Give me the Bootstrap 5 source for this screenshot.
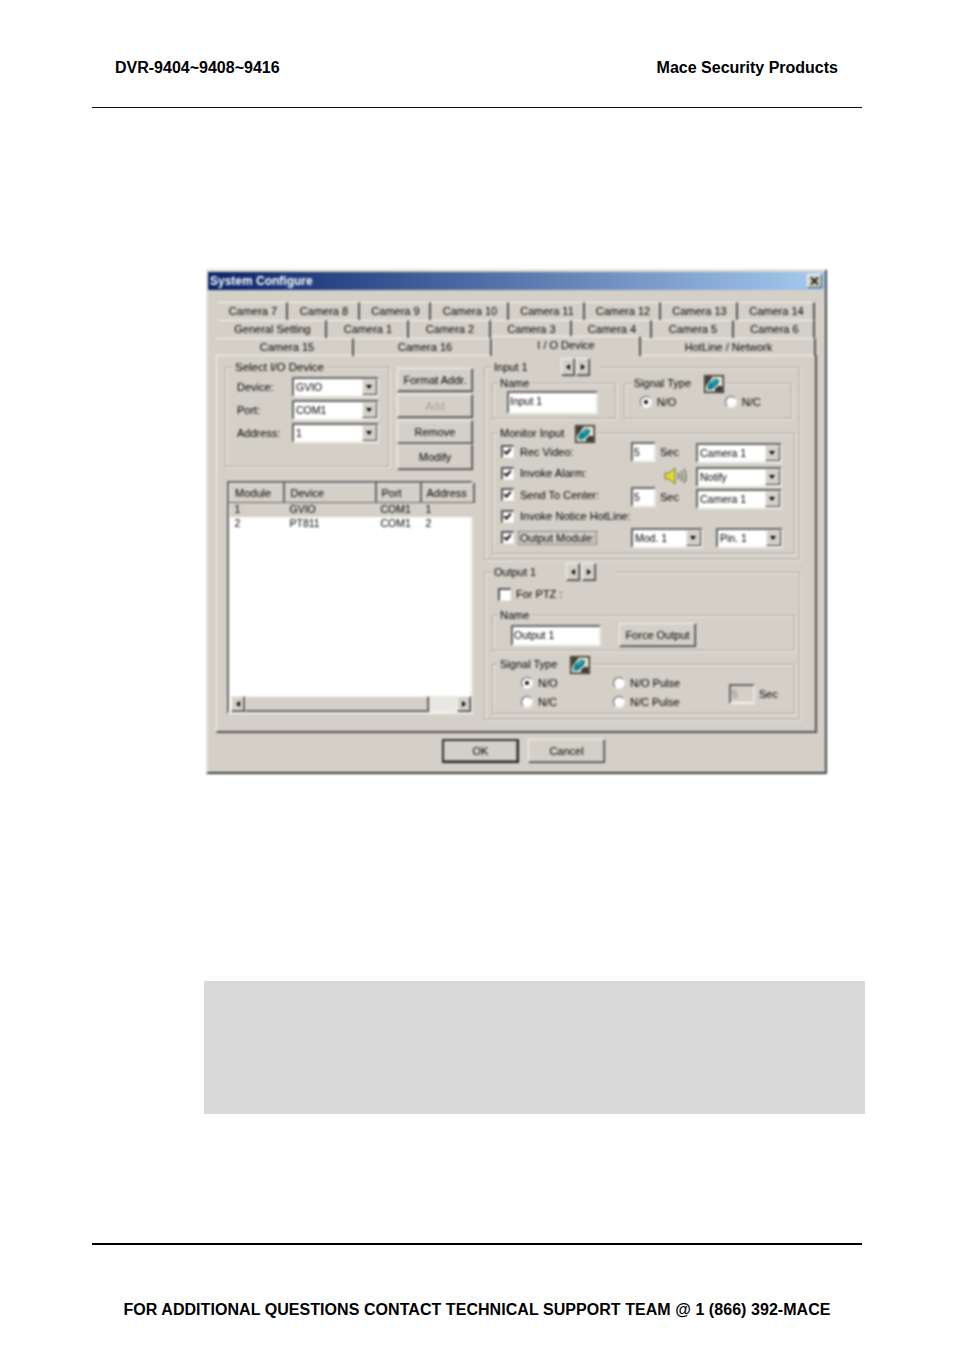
<!DOCTYPE html>
<html lang="en">
<head>
<meta charset="utf-8">
<title>DVR-9404~9408~9416</title>
<link rel="stylesheet" href="https://cdn.jsdelivr.net/npm/bootstrap@5.3.0/dist/css/bootstrap.min.css">
<style>
html,body{margin:0;background:#fff;}
body{font-family:"Liberation Sans",Arial,sans-serif;color:#000;height:1351px;overflow:hidden;}
.sheet{width:770px;margin-left:92px;}
.pagehead{padding:59px 24px 0 23px;height:107px;font:bold 16px/18px "Liberation Sans",Arial,sans-serif;}
.rule1{height:1px;background:#111;}
.rule2{height:2px;background:#000;margin-top:129px;}
.graybox{width:661px;height:133px;margin:207px 0 0 112px;background:#d9d9d9;}
.pagefoot{margin-top:56px;text-align:center;font:bold 16px/18px "Liberation Sans",Arial,sans-serif;white-space:nowrap;letter-spacing:.055px;}

.dlg{width:621px;height:505px;margin:161px 0 0 114px;background:#d4d0c8;border:2px solid;border-color:#e6e4de #4a4a4a #3a3a3a #e6e4de;filter:blur(.8px);
 font:11px/14px "Liberation Sans",Arial,sans-serif;color:#000;white-space:nowrap;}
.wintitle{height:18px;margin-top:1px;padding:0 3px 0 2px;background:linear-gradient(90deg,#0a246a,#a6caf0);color:#fff;font-weight:bold;font-size:12px;}
.winclose{width:15px;height:14px;background:#d4d0c8;border:1px solid;border-color:#fff #404040 #404040 #fff;}
.tabrow{display:grid;height:18px;}
.tabsa{margin:12px 0 0 10px;grid-template-columns:70px 72px 71px 78px 76px 76px 77px 77px;width:597px;}
.tabsb{margin-left:10px;grid-template-columns:109px 82px 82px 81px 80px 82px 81px;width:597px;}
.tabsc{margin-left:8px;grid-template-columns:138px 138px 149px 175px;width:600px;position:relative;z-index:1;}
.tabcell{border-top:1px solid #f4f3ef;border-right:2px solid #555;text-align:center;line-height:16px;padding-left:2px;}
.tabwide{padding-left:6px;}
.tabon{margin-top:-2px;height:20px;background:#d4d0c8;border-left:1px solid #f4f3ef;line-height:17px;padding-left:0;}
.tabpanel{width:601px;height:378px;margin-left:8px;margin-top:-1px;border:1px solid;border-color:#f4f3ef #505050 #505050 #f4f3ef;border-right-width:2px;border-bottom-width:2px;}
.leftcol{width:248px;margin:4px 0 0 8px;}
.rightcol{width:316px;margin:2px 0 0 11px;}
.grp{border:1px solid #a9a59b;box-shadow:1px 1px 0 #f4f3ef,inset 1px 1px 0 #f4f3ef;}
.grp>legend{float:none;width:auto;margin:0 0 0 7px;padding:0 2px;font-size:inherit;line-height:14px;height:14px;background:#d4d0c8;display:flex;align-items:center;}
.grp>legend+*{clear:none;}
.grp.grpnest>legend{margin-left:5px;}
.grpdev{width:164px;height:107px;}
.grpdev>legend{font-size:11.5px;}
.devrows{padding:3px 0 0 11px;}
.devrow{height:20px;margin-bottom:3px;}
.lab55{width:55px;}
.combo{height:20px;background:#fff;border:2px solid;border-color:#666 #e8e6e0 #f4f3ef #666;padding-left:2px;padding-right:15px;position:relative;line-height:17px;color:#000;font-size:10.5px;}
.comboarrow{position:absolute;right:0;top:0;bottom:0;width:15px;background:#d4d0c8;border:1px solid;border-color:#f4f3ef #404040 #404040 #f4f3ef;}
.comboarrow::after{content:"";position:absolute;left:3px;top:5px;border:3.5px solid transparent;border-top:4px solid #000;border-bottom:0;}
.w87{width:87px;}.w86{width:86px;}.w72{width:72px;}.w67{width:67px;}.w68{width:68px;}
.pinbox{margin-left:13px;}
.drop1{margin-top:2px;}
.drop2{margin-top:4px;}
.drop3{margin-top:6px;}
.drop4{margin-top:8px;}
.rbtn{display:flex;align-items:center;justify-content:center;background:#d4d0c8;border:1px solid;border-color:#f4f3ef #404040 #404040 #f4f3ef;box-shadow:inset -1px -1px 0 #808080;color:#000;}
.sidebtns{width:76px;margin:8px 0 0 8px;display:grid;grid-auto-rows:24px;gap:2px;}
.btnup{margin-top:-2px;}
.rbtn.btndim{color:#a5a298;}
.lst{width:246px;height:233px;margin:11px 0 0 2px;background:#fff;border:2px solid;border-color:#666 #e8e6e0 #f4f3ef #666;position:relative;}
.lsttbl{width:244px;table-layout:fixed;border-collapse:collapse;color:#000;}
.lsttbl th{height:19px;font-weight:normal;padding:0 0 0 5px;background:#d4d0c8;border-top:1px solid #f4f3ef;border-left:1px solid #f4f3ef;border-right:2px solid #666;border-bottom:1px solid #666;}
.lsttbl td{height:14px;padding:0 0 0 5px;line-height:13px;font-size:10.5px;}
.lstc1{width:54px;}.lstc2{width:92px;}.lstc3{width:45px;}.lstc4{width:53px;}
.lsttbl .lstc2{padding-left:6px;}
.lstsel td{background:#d4d0c8;}
.lstbar{position:absolute;left:2px;right:0;bottom:0;height:16px;background:#dedcd6;display:flex;}
.sbtn{width:14px;}
.sthumb{width:184px;}
.strack{flex:1;background:repeating-conic-gradient(#d4d0c8 0 25%,#fff 0 50%) 0 0/2px 2px;}
.sbtn::after,.spinb::after{content:"";border:3.5px solid transparent;}
.sleft::after{border-left:0;border-right:4px solid #000;}
.sright::after{border-right:0;border-left:4px solid #000;}
.grpinput{height:202px;}
.spins{margin-left:33px;margin-right:9px;gap:1px;height:18px;}
.spinb{width:14px;height:18px;}
.spinsout{margin-left:30px;margin-right:17px;gap:2px;}
.grpinput>legend,.grpoutput>legend{height:18px;line-height:18px;}
.grpsmall{height:43px;}
.subrow{margin:0 7px;gap:8px;}
.w125{width:125px;}.w170{width:170px;}
.insetfield{background:#fff;border:2px solid;border-color:#666 #e8e6e0 #f4f3ef #666;line-height:17px;padding-left:1px;color:#000;font-size:10.5px;}
.fldname{width:91px;height:23px;margin:1px 0 0 14px;}
.radrow{padding:5px 0 0 15px;}
.radio{flex:none;width:12px;height:12px;border-radius:50%;background:#fff;border:1px solid;border-color:#555 #eee #eee #555;position:relative;}
.radon::after{content:"";position:absolute;left:3px;top:3px;width:4px;height:4px;border-radius:50%;background:#000;}
.radlab{margin-left:5px;}
.grpmon{height:128px;margin:7px 7px 0;width:303px;}
.monrows{padding:0 0 0 8px;display:grid;grid-auto-rows:21.5px;margin-top:1px;}
.chk{flex:none;width:13px;height:13px;background:#fff;border:solid;border-width:2px 1px 1px 2px;border-color:#555 #eee #eee #555;display:flex;}
.chk svg{width:9px;height:9px;}
.chklab{margin-left:6px;width:111px;}
.numfld{width:25px;height:20px;flex:none;}
.seclab{width:40px;padding-left:4px;}
.spk{width:40px;padding-left:7px;}
.gicon{width:20px;height:18px;margin-left:11px;flex:none;margin-top:2px;}
.giconb{margin-left:13px;}
.outlinefocus{outline:1px dotted #333;outline-offset:0;padding:0 1px;margin-left:-1px;}
.grpoutput{height:157px;margin-top:3px;}
.ptzrow{height:20px;margin:3px 0 0 13px;}
.grpoutname{width:303px;height:43px;margin:4px 0 0 7px;}
.fldout{width:90px;height:21px;margin:3px 0 0 18px;}
.forcebtn{width:77px;height:24px;margin:1px 0 0 18px;}
.grpoutsig{width:303px;height:57px;margin:6px 0 0 7px;}
.sigcols{padding:2px 0 0 28px;}
.sigcol{width:92px;display:grid;grid-auto-rows:19px;}
.sigcolb{width:116px;}
.insetfield.fldoff{width:26px;height:20px;background:#d4d0c8;color:#8a8880;margin-top:3px;}
.sigsec{margin:3px 0 0 4px;}
.botbtns{margin:6px 0 0 234px;gap:9px;}
.okbtn,.cancelbtn{width:77px;height:24px;}
.okbtn{border:2px solid;border-color:#333 #222 #222 #333;}
</style>
</head>
<body>
<svg width="0" height="0" class="d-block">
 <symbol id="chip" viewBox="0 0 20 18">
  <rect width="20" height="18" fill="#2e2e28"/>
  <rect x="1.500" y="1.500" width="17" height="15" fill="#efe9cf"/>
  <path d="M1.500 1.500H9L4 8 1.500 12zM11 16.500v-3l4-3 3.500 1v5z" fill="#3c3a32"/>
  <path d="M3 13 5 8 11 3.500 15.500 5 14 9l-6 5.500H4z" fill="#0c8296"/>
  <path d="M7 8 11 5l2 .5-4 3.500z" fill="#3fb6c8"/>
 </symbol>
 <symbol id="tick" viewBox="0 0 11 11"><path d="M1.500 5l2.800 3L9.500 2" fill="none" stroke="#000" stroke-width="2.200"/></symbol>
</svg>
<div class="sheet">
 <header class="pagehead d-flex justify-content-between"><span>DVR-9404~9408~9416</span><span>Mace Security Products</span></header>
 <div class="rule1"></div>

 <div class="dlg">
  <div class="wintitle d-flex align-items-center justify-content-between">
   <span>System Configure</span>
   <span class="winclose d-flex"><svg viewBox="0 0 13 12" width="13" height="12"><path d="M3 2.500l7 7M10 2.500l-7 7" stroke="#222" stroke-width="2"/></svg></span>
  </div>
  <div class="tabrow tabsa"><div class="tabcell">Camera 7</div><div class="tabcell">Camera 8</div><div class="tabcell">Camera 9</div><div class="tabcell">Camera 10</div><div class="tabcell">Camera 11</div><div class="tabcell">Camera 12</div><div class="tabcell">Camera 13</div><div class="tabcell">Camera 14</div></div>
  <div class="tabrow tabsb"><div class="tabcell">General Setting</div><div class="tabcell">Camera 1</div><div class="tabcell">Camera 2</div><div class="tabcell">Camera 3</div><div class="tabcell">Camera 4</div><div class="tabcell">Camera 5</div><div class="tabcell">Camera 6</div></div>
  <div class="tabrow tabsc"><div class="tabcell tabwide">Camera 15</div><div class="tabcell tabwide">Camera 16</div><div class="tabcell tabon">I / O Device</div><div class="tabcell">HotLine / Network</div></div>
  <div class="tabpanel d-flex">
   <div class="leftcol">
    <div class="d-flex">
     <fieldset class="grp grpdev">
      <legend>Select I/O Device</legend>
      <div class="devrows">
       <div class="devrow d-flex align-items-center"><span class="lab55">Device:</span><div class="combo w87">GVIO<span class="comboarrow"></span></div></div>
       <div class="devrow d-flex align-items-center"><span class="lab55">Port:</span><div class="combo w87">COM1<span class="comboarrow"></span></div></div>
       <div class="devrow d-flex align-items-center"><span class="lab55">Address:</span><div class="combo w87">1<span class="comboarrow"></span></div></div>
      </div>
     </fieldset>
     <div class="sidebtns">
      <div class="rbtn">Format Addr.</div><div class="rbtn btndim">Add</div><div class="rbtn">Remove</div><div class="rbtn btnup">Modify</div>
     </div>
    </div>
    <div class="lst">
     <table class="lsttbl">
      <thead><tr><th class="lstc1">Module</th><th class="lstc2">Device</th><th class="lstc3">Port</th><th class="lstc4">Address</th></tr></thead>
      <tbody><tr class="lstsel"><td>1</td><td class="lstc2">GVIO</td><td>COM1</td><td>1</td></tr><tr><td>2</td><td class="lstc2">PT811</td><td>COM1</td><td>2</td></tr></tbody>
     </table>
     <div class="lstbar"><div class="rbtn sbtn sleft"></div><div class="rbtn sthumb"></div><div class="strack"></div><div class="rbtn sbtn sright"></div></div>
    </div>
   </div>
   <div class="rightcol">
    <fieldset class="grp grpinput">
     <legend>Input 1<span class="spins d-flex"><span class="rbtn spinb sleft"></span><span class="rbtn spinb sright"></span></span></legend>
     <div class="subrow d-flex">
      <fieldset class="grp grpsmall grpnest w125"><legend>Name</legend><div class="insetfield fldname">Input 1</div></fieldset>
      <fieldset class="grp grpsmall w170"><legend>Signal Type<svg class="gicon giconb"><use href="#chip"/></svg></legend>
       <div class="radrow d-flex align-items-center"><span class="radio radon"></span><span class="radlab w68">N/O</span><span class="radio"></span><span class="radlab">N/C</span></div>
      </fieldset>
     </div>
     <fieldset class="grp grpnest grpmon"><legend>Monitor Input<svg class="gicon"><use href="#chip"/></svg></legend>
      <div class="monrows">
       <div class="d-flex align-items-center"><span class="chk"><svg><use href="#tick"/></svg></span><span class="chklab">Rec Video:</span><div class="insetfield numfld">5</div><span class="seclab">Sec</span><div class="combo w86 drop1">Camera 1<span class="comboarrow"></span></div></div>
       <div class="d-flex align-items-center"><span class="chk"><svg><use href="#tick"/></svg></span><span class="chklab">Invoke Alarm:</span><span class="numfld"></span><span class="spk drop3"><svg width="26" height="20" viewBox="0 0 26 20"><path d="M2 7h4l6-5v16l-6-5H2z" fill="#e4dc30" stroke="#77723a"/><path d="M15 7q2 3 0 6M18 5q3 5 0 10M21 3q4 7 0 14" fill="none" stroke="#55534c" stroke-width="1.200"/></svg></span><div class="combo w86 drop4">Notify<span class="comboarrow"></span></div></div>
       <div class="d-flex align-items-center"><span class="chk"><svg><use href="#tick"/></svg></span><span class="chklab">Send To Center:</span><div class="insetfield numfld drop2">5</div><span class="seclab drop2">Sec</span><div class="combo w86 drop4">Camera 1<span class="comboarrow"></span></div></div>
       <div class="d-flex align-items-center"><span class="chk"><svg><use href="#tick"/></svg></span><span class="chklab">Invoke Notice HotLine:</span></div>
       <div class="d-flex align-items-center"><span class="chk"><svg><use href="#tick"/></svg></span><span class="chklab"><span class="outlinefocus">Output Module:</span></span><div class="combo w72">Mod. 1<span class="comboarrow"></span></div><div class="combo w67 pinbox">Pin. 1<span class="comboarrow"></span></div></div>
      </div>
     </fieldset>
    </fieldset>
    <fieldset class="grp grpoutput">
     <legend>Output 1<span class="spins spinsout d-flex"><span class="rbtn spinb sleft"></span><span class="rbtn spinb sright"></span></span></legend>
     <div class="ptzrow d-flex align-items-center"><span class="chk"></span><span class="radlab">For PTZ :</span></div>
     <fieldset class="grp grpnest grpoutname"><legend>Name</legend>
      <div class="d-flex"><div class="insetfield fldout">Output 1</div><div class="rbtn forcebtn">Force Output</div></div>
     </fieldset>
     <fieldset class="grp grpnest grpoutsig"><legend>Signal Type<svg class="gicon giconb"><use href="#chip"/></svg></legend>
      <div class="sigcols d-flex align-items-center">
       <div class="sigcol">
        <div class="d-flex align-items-center"><span class="radio radon"></span><span class="radlab">N/O</span></div>
        <div class="d-flex align-items-center"><span class="radio"></span><span class="radlab">N/C</span></div>
       </div>
       <div class="sigcol sigcolb">
        <div class="d-flex align-items-center"><span class="radio"></span><span class="radlab">N/O Pulse</span></div>
        <div class="d-flex align-items-center"><span class="radio"></span><span class="radlab">N/C Pulse</span></div>
       </div>
       <div class="insetfield fldoff">5</div><span class="sigsec">Sec</span>
      </div>
     </fieldset>
    </fieldset>
   </div>
  </div>
  <div class="botbtns d-flex"><div class="rbtn okbtn">OK</div><div class="rbtn cancelbtn">Cancel</div></div>
 </div>

 <div class="graybox"></div>
 <div class="rule2"></div>
 <footer class="pagefoot">FOR ADDITIONAL QUESTIONS CONTACT TECHNICAL SUPPORT TEAM @ 1 (866) 392-MACE</footer>
</div>
</body>
</html>
